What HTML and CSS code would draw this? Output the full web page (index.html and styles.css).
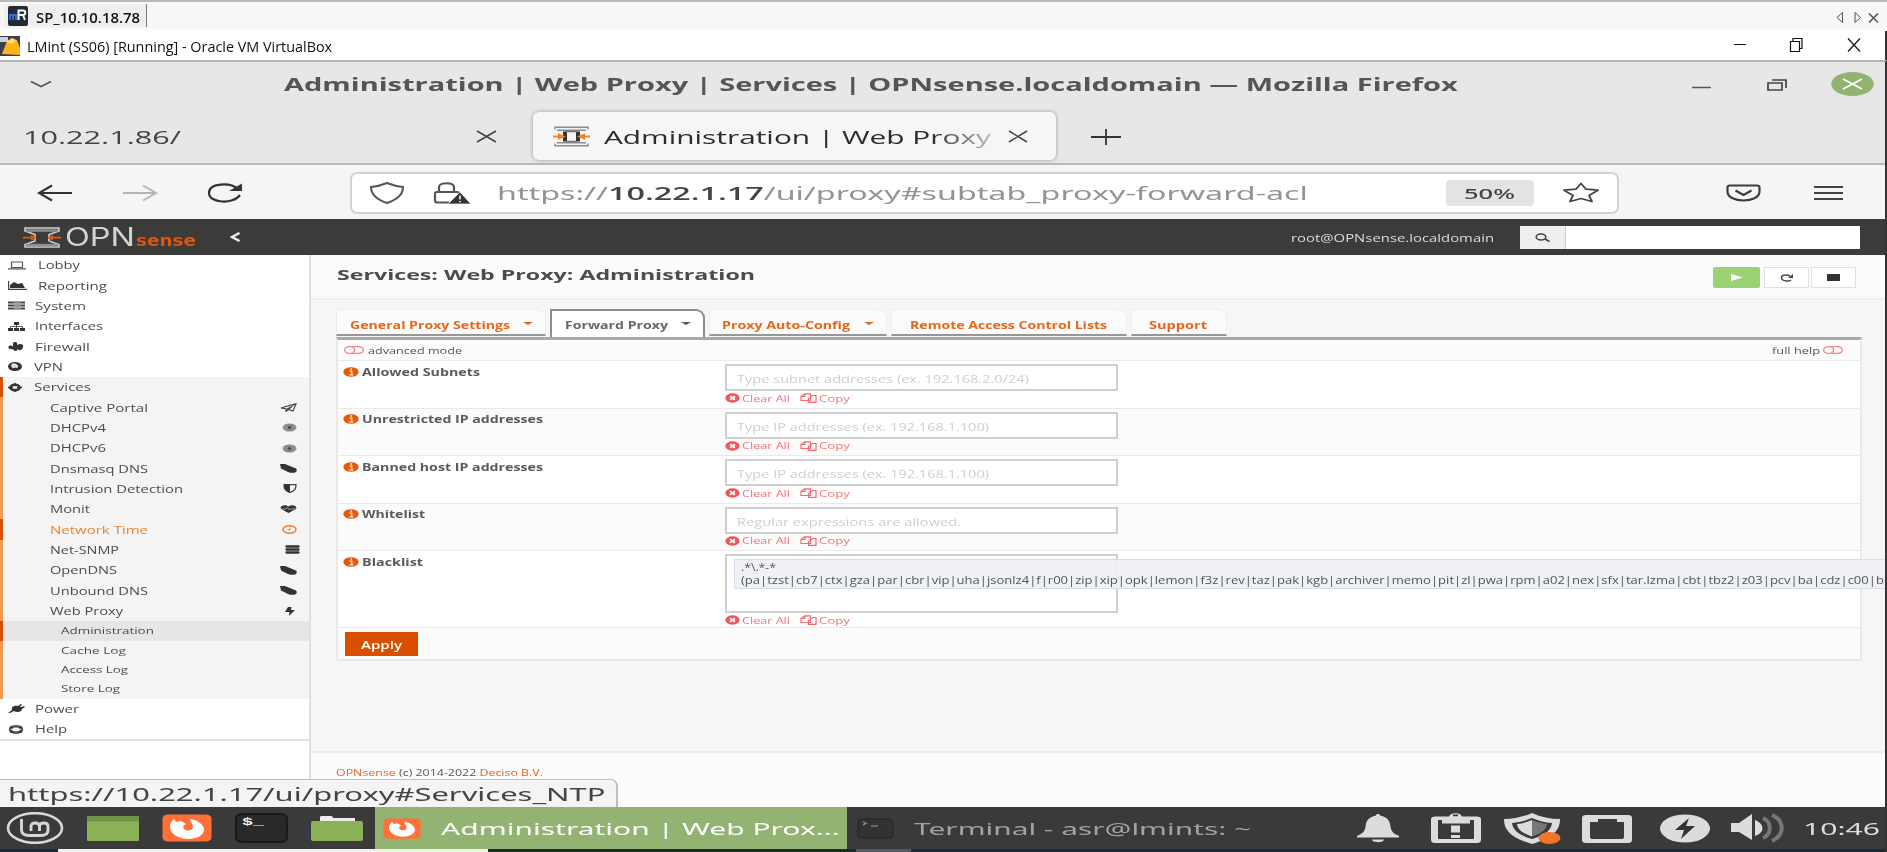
FILE: index.html
```html
<!DOCTYPE html>
<html lang="en">
<head>
<meta charset="utf-8">
<title>LMint (SS06) [Running] - Oracle VM VirtualBox</title>
<link rel="stylesheet" href="styles.css">
</head>
<body>
<svg width="0" height="0" class="defs">
  <defs>
    <symbol id="leaf" viewBox="0 0 17 8" preserveAspectRatio="none"><path d="M0 0h5l11 4c1 1 1 2 0 3-2 1-5 1-8 0L1 4z"/></symbol>
    <symbol id="target" viewBox="0 0 15 9" preserveAspectRatio="none"><ellipse cx="7.5" cy="4.5" rx="7" ry="4.1" fill="#999"/><ellipse cx="7.5" cy="4.5" rx="4.6" ry="2.6" fill="none" stroke="#777"/><ellipse cx="7.5" cy="4.5" rx="2" ry="1.2" fill="#444"/></symbol>
    <symbol id="toggle" viewBox="0 0 20 8" preserveAspectRatio="none"><rect x=".7" y=".7" width="18.6" height="6.6" rx="4" ry="3.3" fill="none" stroke="#f4696b" stroke-width="1.1"/><path d="M8.5 1.5c3 1 3 4 0 5" fill="none" stroke="#f4696b" stroke-width="1.1"/></symbol>
    <symbol id="info" viewBox="0 0 16 10" preserveAspectRatio="none"><ellipse cx="8" cy="5" rx="7.7" ry="4.8" fill="#e25a0c"/><path d="M6.500 4.200h2.300v3.500M6.300 7.900h4M7.400 2h1.600" stroke="#fbe3d3" stroke-width="1.3" fill="none"/></symbol>
    <symbol id="clear" viewBox="0 0 15 10" preserveAspectRatio="none"><ellipse cx="7.5" cy="5" rx="7.2" ry="4.7" fill="#f2545b"/><path d="M5 3.300l5 3.400m0-3.400L5 6.700" stroke="#fff" stroke-width="1.8"/></symbol>
    <symbol id="copy" viewBox="0 0 17 10" preserveAspectRatio="none"><path d="M4.500 .8h6v6.700H1V3.500zM1 3.500h4V1M9 9.300H16V2.500h-3L8.500 5.500V9.300z" fill="none" stroke="#f4696b" stroke-width="1.2"/></symbol>
    <symbol id="fox" viewBox="0 0 50 28" preserveAspectRatio="none"><rect x=".5" y=".5" width="49" height="27" rx="6" ry="3.5" fill="#ff7139"/><path d="M8 13c0-4 2-6 4-8l2 3 5-1 5 3-3 2 1 3c4 3 9 1 9-2 0-4-3-5-3-8 7 1 14 5 14 11 0 5-7 9-16 9S8 20 8 13z" fill="#fff"/></symbol>
    <symbol id="opn" viewBox="0 0 37 21" preserveAspectRatio="none"><path d="M2 3.500V1.200h33v2.300M2 17.500v2.300h33v-2.300M4 4.300h29M4 16.700h29" fill="none" stroke="#8b8b8b" stroke-width="1.5"/><path d="M10 5.500h4v10h-4zM23 5.500h4v10h-4z" fill="#333"/><path d="M12 5.500h13M12 15.500h13" stroke="#777" stroke-width="1.5"/><path d="M0 9.500h5V7.300l8 3.200-8 3.200v-2.200H0zM37 9.500h-5V7.300l-8 3.200 8 3.200v-2.200h5z" fill="#f58220"/></symbol>
  </defs>
</svg>

<div class="host">
  <div class="session-bar">
    <div class="session-tab">
      <svg width="20" height="20" viewBox="0 0 20 20" preserveAspectRatio="none"><rect width="20" height="20" rx="2" fill="#222b33"/><path d="M2 14V9h6v5M5 9v5" stroke="#2f6fe0" stroke-width="2" fill="none"/><path d="M10.500 14V4.500H15c3 0 3 4.500 0 4.500h-4m4 0l2 5" stroke="#fff" stroke-width="2" fill="none"/></svg>
      <span class="t host-tab-text" style="--s:.993">SP_10.10.18.78</span>
    </div>
    <svg class="session-nav" width="44" height="14" viewBox="0 0 44 14"><path d="M6.500 1.500v10L1 6.500zM19 1.500v10l5.500-5z" fill="none" stroke="#555"/><path d="M33 2.500l9 9m0-9l-9 9" stroke="#555" stroke-width="1.600"/></svg>
  </div>
  <div class="vbox-bar">
    <svg width="20" height="20" viewBox="0 0 20 20" preserveAspectRatio="none"><rect width="20" height="20" fill="#3a3f4a"/><path d="M2 18L7 5l5-3 5 2 3 8v7z" fill="#ffb31a"/><path d="M7 6l5-4 4 3-5 3z" fill="#ffd873"/><path d="M0 1h8v5H0z" fill="#ccd3dc"/></svg>
    <span class="t vbox-title" style="--s:.959">LMint (SS06) [Running] - Oracle VM VirtualBox</span>
    <svg class="vbox-controls" width="130" height="16" viewBox="0 0 130 16"><path d="M1 7.500h12M115 1.500l12 13m0-13l-12 13" stroke="#111" stroke-width="1.200"/><path d="M57.500 4.500h9v10h-9zM60 4V1.500h9v10h-2.500" fill="none" stroke="#111" stroke-width="1.200"/></svg>
  </div>

  <div class="guest">
    <div class="ff-title">
      <svg class="chev" width="22" height="8" viewBox="0 0 22 8" preserveAspectRatio="none"><path d="M1 1.500l10 5 10-5" fill="none" stroke="#555" stroke-width="1.7"/></svg>
      <span class="t ff-title-text" style="--s:1.705">Administration | Web Proxy | Services | OPNsense.localdomain — Mozilla Firefox</span>
      <svg class="ff-controls" width="183" height="26" viewBox="0 0 183 26" preserveAspectRatio="none"><path d="M0 16.500h19" stroke="#555" stroke-width="1.5"/><path d="M76 12h14v7H76zM80 9h14v8" fill="none" stroke="#444" stroke-width="1.700"/><ellipse cx="160.500" cy="13" rx="21.300" ry="12" fill="#92b372"/><path d="M151 8l19 10m0-10l-19 10" stroke="#fff" stroke-width="1.700"/></svg>
    </div>

    <div class="ff-tabs">
      <div class="ff-tab">
        <span class="t ff-tab-text dim" style="--s:1.75">10.22.1.86/</span>
        <svg width="21" height="13" viewBox="0 0 21 13" preserveAspectRatio="none"><path d="M1 1l19 11m0-11L1 12" stroke="#444" stroke-width="1.5"/></svg>
      </div>
      <div class="ff-tab active">
        <svg class="favicon" width="37" height="21"><use href="#opn"/></svg>
        <div class="fade"><span class="t ff-tab-text" style="--s:1.705">Administration | Web Proxy</span></div>
        <svg width="20" height="13" viewBox="0 0 21 13" preserveAspectRatio="none"><path d="M1 1l19 11m0-11L1 12" stroke="#444" stroke-width="1.5"/></svg>
      </div>
      <svg class="plus" width="30" height="16" viewBox="0 0 30 16" preserveAspectRatio="none"><path d="M0 8h30M15 0v16" stroke="#333" stroke-width="1.8"/></svg>
    </div>

    <div class="ff-nav">
      <svg class="nav-icons" width="206" height="20" viewBox="0 0 206 20" preserveAspectRatio="none"><path d="M35 10H2M15 2.500L2 10l13 7.500" fill="none" stroke="#333" stroke-width="2.100"/><path d="M86 10h32M106 2.500l13 7.500-13 7.500" fill="none" stroke="#b5b5b5" stroke-width="2"/><path d="M201 6c-8-7-29-6-29 4s24 12 31 2" fill="none" stroke="#333" stroke-width="2.200"/><path d="M205 .5V8h-13z" fill="#333"/></svg>
      <div class="urlbar">
        <svg class="url-icons" width="103" height="24" viewBox="0 0 103 24" preserveAspectRatio="none"><path d="M20 2c5 2 9 3.500 16 4 0 7-4 12-16 16C8 18 4 13 4 6c7-.5 11-2 16-4z" fill="none" stroke="#555" stroke-width="2"/><path d="M82 21.500H70q-2 0-2-2V13q0-2 2-2h20q2 0 2 2M72 11V6c0-5 15-5 15 0v5" fill="none" stroke="#555" stroke-width="2.200"/><path d="M93 11l11 12H81z" fill="#333" stroke="#fff" stroke-width=".7"/><path d="M93 14.500v4m0 1.500v1.200" stroke="#fff" stroke-width="1.5"/></svg>
        <div class="url"><span class="t url-text" style="--s:1.791">https://<b>10.22.1.17</b>/ui/proxy#subtab_proxy-forward-acl</span></div>
        <div class="zoom-badge"><span class="t zoom-text" style="--s:1.703">50%</span></div>
        <svg class="star" width="38" height="21" viewBox="0 0 38 21" preserveAspectRatio="none"><path d="M19 1.500l5 5.700 12 1-9 5.300 3 6-11-3-11 3 3-6-9-5.300 12-1z" fill="none" stroke="#444" stroke-width="1.800" stroke-linejoin="round"/></svg>
      </div>
      <svg class="nav-end" width="118" height="18" viewBox="0 0 118 18" preserveAspectRatio="none"><path d="M4 1.500h27q2.500 0 2.500 2v4c0 12-32 12-32 0v-4q0-2 2.500-2zM9.500 6.500l8 4.500 8-4.500" fill="none" stroke="#3c3c3c" stroke-width="2.200"/><path d="M88 3h29M88 9h29M88 15h29" stroke="#444" stroke-width="2"/></svg>
    </div>

    <div class="opn-head">
      <div class="brand">
        <svg width="38" height="21" viewBox="0 0 38 21" preserveAspectRatio="none"><path d="M2 1h34v3L26 7.500V14l10 3.500V20H2v-2.500L12 14V7.500L2 4z" fill="none" stroke="#d0d0d0" stroke-width="1.600"/><path d="M3 3.500h32M3 18h32" stroke="#8d8d8d" stroke-width="2.500"/><path d="M0 9.800h8V8l6 2.700L8 13.400v-1.800H0zM38 9.800h-8V8l-6 2.700 6 2.700v-1.800h8z" fill="#e2570f"/></svg>
        <div class="brand-opn"><span class="t brand-opn-text" style="--s:1.298">OPN</span></div>
        <div class="brand-sense"><span class="t brand-sense-text" style="--s:1.151">sense</span></div>
        <svg class="brand-chev" width="11" height="10" viewBox="0 0 11 10" preserveAspectRatio="none"><path d="M9.500 1L2 5l7.500 4" fill="none" stroke="#eee" stroke-width="2.400"/></svg>
      </div>
      <div class="opn-user"><span class="t user-text" style="--s:1.352">root@OPNsense.localdomain</span></div>
      <div class="opn-search">
        <div class="search-btn"><svg width="16" height="9" viewBox="0 0 16 9" preserveAspectRatio="none"><ellipse cx="6" cy="4" rx="4.800" ry="3" fill="none" stroke="#444" stroke-width="1.600"/><path d="M10 6l4.500 2.500" stroke="#444" stroke-width="1.800"/></svg></div>
      </div>
    </div>

    <div class="opn-body">
      <nav class="side">
        <div class="row"><svg width="18" height="9" viewBox="0 0 18 9" preserveAspectRatio="none"><path d="M3.500 1h11v5.500h-11zM0 7.800h18" fill="none" stroke="#555" stroke-width="1.200"/></svg><span class="t nav-t far" style="--s:1.404">Lobby</span></div>
        <div class="row"><svg width="19" height="9" viewBox="0 0 19 9" preserveAspectRatio="none"><path d="M.6 0v8.300H19" fill="none" stroke="#444" stroke-width="1.200"/><path d="M2 7V4l4-3 4 2 4-1 3 5z" fill="#333"/></svg><span class="t nav-t far" style="--s:1.439">Reporting</span></div>
        <div class="row"><svg width="17" height="9" viewBox="0 0 17 9" preserveAspectRatio="none"><path d="M0 1.500h17M0 4.500h17M0 7.500h17" stroke="#444" stroke-width="2.200"/><path d="M6 1.500h7M6 4.500h7M6 7.500h7" stroke="#999" stroke-width=".8"/></svg><span class="t nav-t" style="--s:1.441">System</span></div>
        <div class="row"><svg width="17" height="9" viewBox="0 0 17 9" preserveAspectRatio="none"><path d="M6 0h5v3H6zM0 6h5v3H0zM6 6h5v3H6zM12 6h5v3h-5z" fill="#333"/><path d="M8.500 3v3M2.500 6V4.500h12V6" fill="none" stroke="#333" stroke-width=".8"/></svg><span class="t nav-t" style="--s:1.399">Interfaces</span></div>
        <div class="row"><svg width="16" height="9" viewBox="0 0 16 9" preserveAspectRatio="none"><path d="M5 1c2-2 5-1 4 2 3-2 7-1 6 2-1 4-4 4-5 2-1 3-5 2-5 0-3 1-6-1-4-3 2-1 4 0 4 1z" fill="#333"/></svg><span class="t nav-t" style="--s:1.465">Firewall</span></div>
        <div class="row"><svg width="14" height="9" viewBox="0 0 14 9" preserveAspectRatio="none"><ellipse cx="7" cy="4.500" rx="7" ry="4.500" fill="#333"/><path d="M3 3c1-2 4-2 5-1s3 1 2 3-3 0-4 1-3-1-3-3z" fill="#ddd"/></svg><span class="t nav-t near" style="--s:1.416">VPN</span></div>
        <div class="row open"><svg width="14" height="9" viewBox="0 0 14 9" preserveAspectRatio="none"><ellipse cx="7" cy="4.500" rx="4.500" ry="2.700" fill="none" stroke="#333" stroke-width="2.600"/><path d="M7 0v9M0 4.500h14" stroke="#333" stroke-width="1.5"/><ellipse cx="7" cy="4.500" rx="2" ry="1.200" fill="#fff"/></svg><span class="t nav-t near" style="--s:1.433">Services</span></div>
        <div class="sub">
          <div class="row2"><span class="t nav-t" style="--s:1.435">Captive Portal</span><svg width="17" height="9" viewBox="0 0 17 9" preserveAspectRatio="none"><path d="M1 5L16 .7 13 8 8 6.500 6 8.500V6z" fill="none" stroke="#444" stroke-width="1.200"/><path d="M6 6l9-5-6 6z" fill="#444"/></svg></div>
          <div class="row2"><span class="t nav-t" style="--s:1.416">DHCPv4</span><svg width="15" height="9"><use href="#target"/></svg></div>
          <div class="row2"><span class="t nav-t" style="--s:1.416">DHCPv6</span><svg width="15" height="9"><use href="#target"/></svg></div>
          <div class="row2"><span class="t nav-t" style="--s:1.399">Dnsmasq DNS</span><svg width="17" height="9" fill="#333"><use href="#leaf"/></svg></div>
          <div class="row2"><span class="t nav-t" style="--s:1.41">Intrusion Detection</span><svg width="14" height="9" viewBox="0 0 14 9" preserveAspectRatio="none"><path d="M1 .7h12c0 4-1 6-6 7.800C2 6.700 1 4.700 1 .7z" fill="none" stroke="#444" stroke-width="1.300"/><path d="M1 .7h6v8C2 6.700 1 4 1 .7z" fill="#333"/></svg></div>
          <div class="row2"><span class="t nav-t" style="--s:1.399">Monit</span><svg width="17" height="8" viewBox="0 0 17 8" preserveAspectRatio="none"><path d="M8.500 8L1 4C-1 1 5-1 8.500 1.500 12-1 18 1 16 4z" fill="#333"/><path d="M1 4h5l1.500-1.500L9.500 5l1-1H16" fill="none" stroke="#ccc" stroke-width=".7"/></svg></div>
          <div class="row2 hover"><span class="t nav-t" style="--s:1.429">Network Time</span><svg width="15" height="9" viewBox="0 0 15 9" preserveAspectRatio="none"><ellipse cx="7.500" cy="4.500" rx="6.500" ry="3.700" fill="none" stroke="#f08030" stroke-width="1.600"/><path d="M8 2.500v2.300H5.500" fill="none" stroke="#f08030"/></svg></div>
          <div class="row2"><span class="t nav-t" style="--s:1.37">Net-SNMP</span><svg class="shift" width="15" height="9" viewBox="0 0 15 9" preserveAspectRatio="none"><path d="M1.500 1.500h12M1.500 4.500h12M1.500 7.500h12" stroke="#333" stroke-width="2.300" stroke-linecap="round"/></svg></div>
          <div class="row2"><span class="t nav-t" style="--s:1.39">OpenDNS</span><svg width="17" height="9" fill="#333"><use href="#leaf"/></svg></div>
          <div class="row2"><span class="t nav-t" style="--s:1.397">Unbound DNS</span><svg width="17" height="9" fill="#333"><use href="#leaf"/></svg></div>
          <div class="row2"><span class="t nav-t" style="--s:1.392">Web Proxy</span><svg class="bolt" width="10" height="9" viewBox="0 0 10 9" preserveAspectRatio="none"><path d="M3 0h3.500L6 3h4L4 9l.5-4H0z" fill="#333"/></svg></div>
          <div class="row3 current"><span class="t nav-s" style="--s:1.495">Administration</span></div>
          <div class="row3"><span class="t nav-s" style="--s:1.515">Cache Log</span></div>
          <div class="row3"><span class="t nav-s" style="--s:1.48">Access Log</span></div>
          <div class="row3"><span class="t nav-s" style="--s:1.488">Store Log</span></div>
        </div>
        <div class="row"><svg width="17" height="9" viewBox="0 0 17 9" preserveAspectRatio="none"><path d="M0 9l4-3c-1-3 2-5 6-4l3-2 1 1-2 1.500 1 .7L16 2l1 1-3 2c0 3-5 4-8 2L2 9z" fill="#333"/></svg><span class="t nav-t" style="--s:1.421">Power</span></div>
        <div class="row"><svg width="16" height="9" viewBox="0 0 16 9" preserveAspectRatio="none"><ellipse cx="8" cy="4.500" rx="6" ry="3.200" fill="none" stroke="#555" stroke-width="2.600"/><path d="M2 1.500l3 1.500m6 0l3-1.500M2 7.500L5 6m6 0l3 1.500" stroke="#222"/></svg><span class="t nav-t" style="--s:1.409">Help</span></div>
        <div class="side-end"></div>
      </nav>

      <main class="content">
        <header class="page-head">
          <span class="t page-title" style="--s:1.545">Services: Web Proxy: Administration</span>
          <div class="svc">
            <div class="svc-btn go"><svg width="12" height="7" viewBox="0 0 12 7" preserveAspectRatio="none"><path d="M0 0l12 3.500L0 7z" fill="#fff"/></svg></div>
            <div class="svc-btn"><svg width="13" height="8" viewBox="0 0 13 8" preserveAspectRatio="none"><path d="M10 2C6 0 1 1 1.500 4S8 8 11 6" fill="none" stroke="#444" stroke-width="1.5"/><path d="M13 0v4H8z" fill="#444"/></svg></div>
            <div class="svc-btn"><svg width="13" height="7"><rect width="13" height="7" fill="#333"/></svg></div>
          </div>
        </header>

        <div class="tabs">
          <div class="tab tab1"><span class="t tab-t" style="--s:1.345">General Proxy Settings</span><i class="caret"></i></div>
          <div class="tab tab2 on"><span class="t tab-t" style="--s:1.348">Forward Proxy</span><i class="caret"></i></div>
          <div class="tab tab3"><span class="t tab-t" style="--s:1.354">Proxy Auto-Config</span><i class="caret"></i></div>
          <div class="tab tab4"><span class="t tab-t" style="--s:1.342">Remote Access Control Lists</span></div>
          <div class="tab tab5"><span class="t tab-t" style="--s:1.387">Support</span></div>
        </div>

        <div class="panel">
          <div class="mode">
            <svg width="20" height="8"><use href="#toggle"/></svg>
            <span class="t small" style="--s:1.402">advanced mode</span>
            <div class="help"><div class="help-w"><span class="t small" style="--s:1.421">full help</span></div><svg width="20" height="8"><use href="#toggle"/></svg></div>
          </div>
          <div class="field">
            <div class="label"><svg width="16" height="10"><use href="#info"/></svg><span class="t label-t" style="--s:1.357">Allowed Subnets</span></div>
            <div><div class="input"><span class="t ph" style="--s:1.387">Type subnet addresses (ex. 192.168.2.0/24)</span></div>
            <div class="acts"><svg width="15" height="10"><use href="#clear"/></svg><div class="act-w"><span class="t small" style="--s:1.401">Clear All</span></div><svg width="17" height="10"><use href="#copy"/></svg><span class="t small" style="--s:1.469">Copy</span></div></div>
          </div>
          <div class="field alt">
            <div class="label"><svg width="16" height="10"><use href="#info"/></svg><span class="t label-t" style="--s:1.347">Unrestricted IP addresses</span></div>
            <div><div class="input"><span class="t ph" style="--s:1.385">Type IP addresses (ex. 192.168.1.100)</span></div>
            <div class="acts"><svg width="15" height="10"><use href="#clear"/></svg><div class="act-w"><span class="t small" style="--s:1.401">Clear All</span></div><svg width="17" height="10"><use href="#copy"/></svg><span class="t small" style="--s:1.469">Copy</span></div></div>
          </div>
          <div class="field">
            <div class="label"><svg width="16" height="10"><use href="#info"/></svg><span class="t label-t" style="--s:1.351">Banned host IP addresses</span></div>
            <div><div class="input"><span class="t ph" style="--s:1.385">Type IP addresses (ex. 192.168.1.100)</span></div>
            <div class="acts"><svg width="15" height="10"><use href="#clear"/></svg><div class="act-w"><span class="t small" style="--s:1.401">Clear All</span></div><svg width="17" height="10"><use href="#copy"/></svg><span class="t small" style="--s:1.469">Copy</span></div></div>
          </div>
          <div class="field alt">
            <div class="label"><svg width="16" height="10"><use href="#info"/></svg><span class="t label-t" style="--s:1.334">Whitelist</span></div>
            <div><div class="input"><span class="t ph" style="--s:1.395">Regular expressions are allowed.</span></div>
            <div class="acts"><svg width="15" height="10"><use href="#clear"/></svg><div class="act-w"><span class="t small" style="--s:1.401">Clear All</span></div><svg width="17" height="10"><use href="#copy"/></svg><span class="t small" style="--s:1.469">Copy</span></div></div>
          </div>
          <div class="field tall">
            <div class="label"><svg width="16" height="10"><use href="#info"/></svg><span class="t label-t" style="--s:1.365">Blacklist</span></div>
            <div><div class="input big">
              <div class="token">
                <div class="token-line top"><span class="t tok" style="--s:1.162">.*\.*-*</span></div>
                <div class="token-line"><span class="t tok" style="--s:1.241">(pa|tzst|cb7|ctx|gza|par|cbr|vip|uha|jsonlz4|f|r00|zip|xip|opk|lemon|f3z|rev|taz|pak|kgb|archiver|memo|pit|zl|pwa|rpm|a02|nex|sfx|tar.lzma|cbt|tbz2|z03|pcv|ba|cdz|c00|b</span></div>
              </div>
            </div>
            <div class="acts"><svg width="15" height="10"><use href="#clear"/></svg><div class="act-w"><span class="t small" style="--s:1.401">Clear All</span></div><svg width="17" height="10"><use href="#copy"/></svg><span class="t small" style="--s:1.469">Copy</span></div></div>
          </div>
          <div class="apply-row"><div class="apply"><span class="t apply-t" style="--s:1.435">Apply</span></div></div>
        </div>

        <footer class="foot"><span class="t foot-t" style="--s:1.378"><a>OPNsense</a> (c) 2014-2022 <a>Deciso B.V.</a></span></footer>
      </main>
      <div class="status"><span class="t status-t" style="--s:1.717">https://10.22.1.17/ui/proxy#Services_NTP</span></div>
    </div>

    <div class="taskbar">
      <div class="launchers">
        <svg width="58" height="32" viewBox="0 0 58 32" preserveAspectRatio="none"><ellipse cx="29" cy="16" rx="27" ry="14.800" fill="none" stroke="#d8d8d8" stroke-width="2.600"/><path d="M15.500 7v11q0 5.500 8 5.500h11q7.500 0 7.500-5v-4q0-3.500-4.200-3.500t-4.300 3.500V19M33.500 14.500q0-3.500-4.300-3.500t-4.200 3.500V19" fill="none" stroke="#d8d8d8" stroke-width="2.900"/></svg>
        <svg width="52" height="25" viewBox="0 0 52 25" preserveAspectRatio="none"><rect width="52" height="25" rx="1" fill="#8bb158"/><rect width="52" height="5.500" fill="#70914a"/></svg>
        <svg width="50" height="28"><use href="#fox"/></svg>
        <svg width="53" height="30" viewBox="0 0 53 30" preserveAspectRatio="none"><rect x="1" y="1" width="51" height="28" rx="7" ry="4" fill="#292929" stroke="#191919" stroke-width="2"/><text x="7" y="12" class="term" textLength="22" lengthAdjust="spacingAndGlyphs">$_</text></svg>
        <svg width="52" height="25" viewBox="0 0 52 25" preserveAspectRatio="none"><path d="M9 5V1q0-1 2-1h9q2 0 2 2h22v4H9z" fill="#eee"/><rect y="5" width="52" height="20" rx="2" fill="#8bb158"/></svg>
      </div>
      <div class="task active"><svg width="38" height="21" viewBox="0 0 50 28" preserveAspectRatio="none"><use href="#fox" width="50" height="28"/></svg><span class="t task-t" style="--s:1.765">Administration | Web Prox...</span></div>
      <div class="task"><svg width="37" height="21" viewBox="0 0 37 21" preserveAspectRatio="none"><rect x="1" y="1" width="35" height="19" rx="4" ry="3" fill="#323232" stroke="#2a2a2a" stroke-width="1.5"/><path d="M6 4l3 1.500L6 7M14 8h7" stroke="#999" stroke-width="1.200" fill="none"/></svg><span class="t task-t" style="--s:1.755">Terminal - asr@lmints: ~</span></div>
      <svg class="tray" width="430" height="32" viewBox="0 0 430 32" preserveAspectRatio="none">
        <g fill="#dcdcdc">
          <path d="M21 2c1.500 0 2 .6 2 1.500 8 1.500 10 6 10.500 11 .6 5 3 7 8.500 9.500v1.500H0V24c5.500-2.500 8-4.500 8.500-9.500C9 9.500 11 5 19 3.500 19 2.600 19.500 2 21 2zM15 27.500h12c0 3.500-12 3.500-12 0z"/>
          <path fill-rule="evenodd" d="M78 4.500h14c1-4.500 12-4.500 13 0h15q4 0 4 2.500v21q0 3-4 3H78q-4 0-4-3V7q0-2.500 4-2.500zM81 8v19h36V8h-4v3.500H85V8zM96 4.200h5V2.500h-5z"/><path d="M94 13.500h9v7h-9zM94 23h9v3h-9z"/>
          <path fill-rule="evenodd" d="M175 1c9 4 18 6 28 6 0 9-4 18-28 25-24-7-28-16-28-25 10 0 19-2 28-6zm0 5c-7 3-13 4.500-20 5 1 7 6 12 20 16 14-4 19-9 20-16-7-.5-13-2-20-5z"/><path d="M175 8c-5 2-10 3.500-15 4 1 6 5 9 15 12.500z"/>
          <path fill-rule="evenodd" d="M229 3h42q4 0 4 3v22q0 3-4 3h-42q-4 0-4-3V6q0-3 4-3zm12 4v3h-8v15q0 2 2 2h30q2 0 2-2V10h-7V7z"/>
          <ellipse cx="328" cy="16.500" rx="25" ry="14"/>
          <path d="M374 11h8l13-9v26l-13-8h-8zM398 8c10 4 10 13 0 16z"/>
        </g>
        <path d="M175 8c5 2 10 3.500 15 4-1 6-5 9-15 12.500z" fill="#777"/>
        <ellipse cx="192.500" cy="26" rx="11" ry="6" fill="#f37329"/>
        <path d="M332 6l-14 12h9l-3 9 14-13h-9z" fill="#333"/>
        <path d="M406 6c9 4 9 16 0 20M415 3c13 6 13 20 0 26" fill="none" stroke="#777" stroke-width="4"/>
      </svg>
      <div class="clock"><span class="t clock-t" style="--s:1.772">10:46</span></div>
    </div>
    <div class="below"><div class="below-a"></div><div class="below-b"></div></div>
  </div>
</div>
</body>
</html>
```
FILE: styles.css
```css
* { box-sizing: border-box; }
body { margin: 0; width: 1887px; height: 852px; overflow: hidden; font-family: "Open Sans", "Noto Sans", sans-serif; color: #444; }
svg { display: block; flex: none; }
.defs { position: absolute; }

/* Labels are widened horizontally by their own factor. */
.t { display: inline-block; flex: none; white-space: nowrap; transform: scaleX(var(--s, 1)); transform-origin: 0 50%; }

.host { height: 852px; background: #fff; border-top: 2px solid #b9b9b9; }
.session-bar { display: flex; justify-content: space-between; height: 29px; padding: 2px 7px 2px 4px; background: #f7f7f7; border-bottom: 2px solid #fdfdfd; }
.session-tab { display: flex; align-items: center; gap: 8px; width: 143px; padding-left: 4px; background: #efefef; border-right: 1px solid #777; overflow: hidden; }
.session-nav { margin-top: 7px; }
.host-tab-text { font-size: 15px; font-weight: 600; color: #111; padding-top: 2px; }
.vbox-bar { display: flex; align-items: center; height: 29px; background: #fff; border-right: 2px solid #333; }
.vbox-title { margin-left: 7px; font-size: 15px; color: #111; }
.vbox-controls { margin-left: auto; margin-right: 22px; margin-top: -2px; }

.guest { height: 792px; overflow: hidden; border-top: 2px solid #b4b4b4; border-right: 2px solid #333; background: #e7e7e7; }
.ff-title { display: flex; align-items: center; height: 44px; padding-left: 30px; }
.ff-title-text { margin-left: 232px; font-size: 17px; font-weight: 700; color: #555; }
.ff-controls { margin-left: auto; margin-right: 10px; }

.ff-tabs { display: flex; height: 59px; padding-top: 6px; border-bottom: 2px solid #b9b9b9; }
.ff-tab { display: flex; align-items: center; justify-content: space-between; width: 533px; height: 48px; padding: 1px 36px 0 23px; }
.ff-tab-text { font-size: 17.5px; font-weight: 500; color: #2c2c2c; }
.ff-tab-text.dim { color: #444; }
.ff-tab.active { width: 523px; padding: 1px 28px 0 20px; border-radius: 6px; background: #f6f6f6; box-shadow: 0 0 4px #9a9a9f; }
.fade { width: 389px; margin-right: 14px; margin-left: 13px; overflow: hidden; -webkit-mask-image: linear-gradient(90deg, #000 84%, rgba(0,0,0,.25)); mask-image: linear-gradient(90deg, #000 84%, rgba(0,0,0,.25)); }
.plus { margin: 17px 0 0 35px; }

.ff-nav { display: flex; align-items: center; height: 54px; padding-top: 1px; background: #f5f5f5; }
.nav-icons { margin-left: 37px; }
.urlbar { display: flex; align-items: center; width: 1269px; height: 42px; margin-left: 107px; border: 2px solid #d2d2d2; border-radius: 7px; background: #fff; font-family: "Noto Sans", sans-serif; }
.url-icons { margin-left: 15px; }
.url { width: 948px; margin-left: 27px; }
.url-text { font-size: 18px; font-weight: 400; color: #949494; }
.url-text b { font-family: "Open Sans", sans-serif; font-weight: 600; color: #444; }
.zoom-badge { width: 88px; height: 26px; margin-left: 1px; padding-left: 18px; border-radius: 4px; background: #e3e3e3; line-height: 26px; }
.zoom-text { font-size: 15px; font-weight: 500; color: #444; }
.star { margin-left: 28px; }
.nav-end { margin-left: 107px; }

.opn-head { display: flex; align-items: center; height: 36px; background: #3b3b3a; }
.brand { display: flex; align-items: center; width: 1291px; padding-left: 23px; }
.brand-opn { width: 71px; margin-left: 4px; padding-top: 2px; }
.brand-opn-text { font: 400 25px/22px Inter, sans-serif; color: #d2d2d2; }
.brand-sense { width: 63px; padding-top: 5px; }
.brand-sense-text { font: 700 16px/20px "DejaVu Sans", sans-serif; color: #dd550f; }
.brand-chev { margin-left: 31px; }
.user-text { font-size: 11px; color: #ddd; }
.opn-user { width: 229px; margin-top: -3px; }
.opn-search { width: 340px; height: 23px; background: #fff; }
.search-btn { display: flex; align-items: center; justify-content: center; width: 46px; height: 23px; background: #eee; border-right: 1px solid #ccc; }

.opn-body { position: relative; display: flex; height: 552px; }
.side { width: 311px; background: #fff; border-right: 2px solid #dfdfdf; }
.row, .row2, .row3 { display: flex; align-items: center; height: 20.35px; }
.row { display: grid; grid-template-columns: 27px 1fr; justify-items: start; padding-left: 8px; }
.far { margin-left: 2.5px; }
.near { margin-left: -1.5px; }
.nav-t { font-size: 10.5px; line-height: 14px; color: #4c4c4c; }
.nav-s { font-size: 9px; line-height: 12px; color: #4c4c4c; }
.row.open { padding-left: 5px; background: #f4f4f4; border-left: 3px solid #dd4f00; }
.sub { background: #f4f4f4; border-left: 3px solid #ef9a55; }
.row2 { justify-content: space-between; padding-left: 46.5px; padding-right: 12px; }
.row2 .shift { margin-right: -3px; }
.row2 .bolt { margin-right: 2px; }
.hover, .current { margin-left: -3px; border-left: 3px solid #dd4f00; }
.hover .nav-t { color: #f08030; }
.row3 { height: 19.2px; padding-left: 58px; }
.current { height: 20px; background: #e6e6e6; }
.side-end { height: 2px; background: #e4e4e4; }

.content { display: flex; flex-direction: column; width: 1574px; background: #f6f6f6; }
.page-head { display: flex; justify-content: space-between; height: 45px; padding: 9px 29px 0 26px; background: #fbfbfb; border-bottom: 2px solid #efefef; }
.page-title { font-size: 15px; font-weight: 700; line-height: 20px; color: #4c4c4c; }
.svc { display: flex; gap: 2px; padding-top: 3px; }
.svc-btn { display: flex; align-items: center; justify-content: center; width: 45px; height: 21px; border: 1px solid #e0e0e0; background: #fff; }
.svc-btn.go { width: 47px; margin-right: 2px; border: 0; border-radius: 2px; background: #9bd274; }

.tabs { display: flex; gap: 4px; height: 28px; margin: 9px 23px 0 25px; }
.tab { position: relative; height: 27px; padding-left: 13px; border: 1px solid #eee; border-bottom: 2px solid #979797; border-top-right-radius: 9px; background: #fbfbfb; line-height: 27px; }
.tab1 { width: 210px; }
.tab2 { width: 155px; padding-left: 13px; }
.tab3 { width: 178px; padding-left: 12px; }
.tab4 { width: 236px; padding-left: 18px; }
.tab5 { width: 96px; padding-left: 17px; }
.tab.on { height: 28px; border: 2px solid #8d8d8d; border-bottom: 0; background: #fff; line-height: 25px; }
.tab-t { font-size: 10.5px; font-weight: 700; line-height: 14px; color: #e8651a; }
.on .tab-t { color: #666; }
.caret { position: absolute; right: 12px; top: 12px; border: 5px solid transparent; border-top: 3px solid #e8651a; border-bottom: 0; }
.on .caret { border-top-color: #555; top: 11px; }

.panel { width: 1526px; height: 324px; margin-left: 25px; border: 2px solid #e9e9e9; border-top: 3px solid #a9a9a9; background: #fbfbfb; }
.mode { display: flex; align-items: center; height: 21px; padding-left: 6px; border-bottom: 1px solid #ececec; }
.mode > .small { margin-left: 4px; }
.help { display: flex; align-items: center; margin-left: auto; margin-right: 17px; }
.help-w { display: flex; width: 51px; }
.small { font-size: 9px; line-height: 11px; color: #555; }
.field { display: grid; grid-template-columns: 387px 1fr; height: 47.5px; padding-top: 3px; border-bottom: 1px solid #e9e9e9; background: #fff; }
.field.alt { background: #fbfbfb; }
.field.tall { height: 77px; }
.label { display: flex; align-items: center; height: 15px; padding-left: 5px; gap: 3px; }
.label-t { font-size: 10.5px; font-weight: 700; line-height: 14px; color: #5a5a5a; }
.input { position: relative; width: 393px; height: 27px; padding: 0 10px; border: 2px solid #cfcfcf; background: #fff; line-height: 22px; }
.input.big { height: 59px; }
.ph { font-size: 10.5px; line-height: 14px; color: #cfcfcf; }
.acts { display: flex; align-items: center; height: 14px; gap: 2px; }
.acts .small { color: #f4747a; }
.act-w { display: flex; width: 56px; }
.token { position: absolute; left: 7px; top: 3px; width: 1160px; height: 30px; padding-left: 6px; border: 1px solid #d5dcee; border-right: 0; background: rgba(238, 240, 246, .93); }
.token-line { height: 14px; line-height: 14px; }
.token-line.top { height: 13px; margin-top: -2px; }
.tok { font-size: 10.5px; line-height: 14px; color: #555; }
.apply-row { padding: 4px 0 0 7px; }
.apply { width: 73px; height: 24px; padding-left: 16px; background: #d94f00; line-height: 23px; }
.apply-t { font-size: 10.5px; font-weight: 600; line-height: 14px; color: #fff; }

.foot { display: flex; align-items: flex-start; height: 56px; margin-top: auto; padding: 13px 0 0 25px; background: #fbfbfb; border-top: 2px solid #ececec; }
.foot-t { font-size: 9px; line-height: 14px; color: #555; }
.foot-t a { color: #e8651a; }
.status { position: absolute; left: 0; bottom: 0; width: 618px; height: 28px; padding-left: 8px; border-top: 1px solid #bdbdbd; border-right: 2px solid #bdbdbd; border-top-right-radius: 7px; background: #f4f4f4; line-height: 28px; font-family: "Noto Sans", sans-serif; }
.status-t { font-size: 18px; line-height: 28px; color: #444; }

.taskbar { display: flex; align-items: center; height: 42px; background: #3a3a3a; font-family: "Noto Sans", sans-serif; }
.launchers { display: flex; align-items: center; gap: 23px; width: 375px; padding-left: 6px; }
.task { display: flex; align-items: center; width: 508px; height: 42px; gap: 20px; padding-left: 10px; }
.task.active { width: 472px; padding-left: 8px; background: #92b372; }
.task-t { padding-top: 1px; font-size: 17px; color: #a2a2a2; }
.active .task-t { color: #fff; }
.tray { margin-left: 2px; }
.clock { margin-left: 16px; width: 80px; }
.clock-t { padding-top: 1px; font-size: 17px; color: #ddd; }
.term { font: 700 11px "Liberation Mono", monospace; fill: #eee; }
.below { display: flex; height: 3px; padding-left: 58px; background: #1b2936; }
.below-a { width: 430px; background: #f2f2f2; }
.below-b { width: 55px; margin-left: 368px; background: #555a66; }
```
